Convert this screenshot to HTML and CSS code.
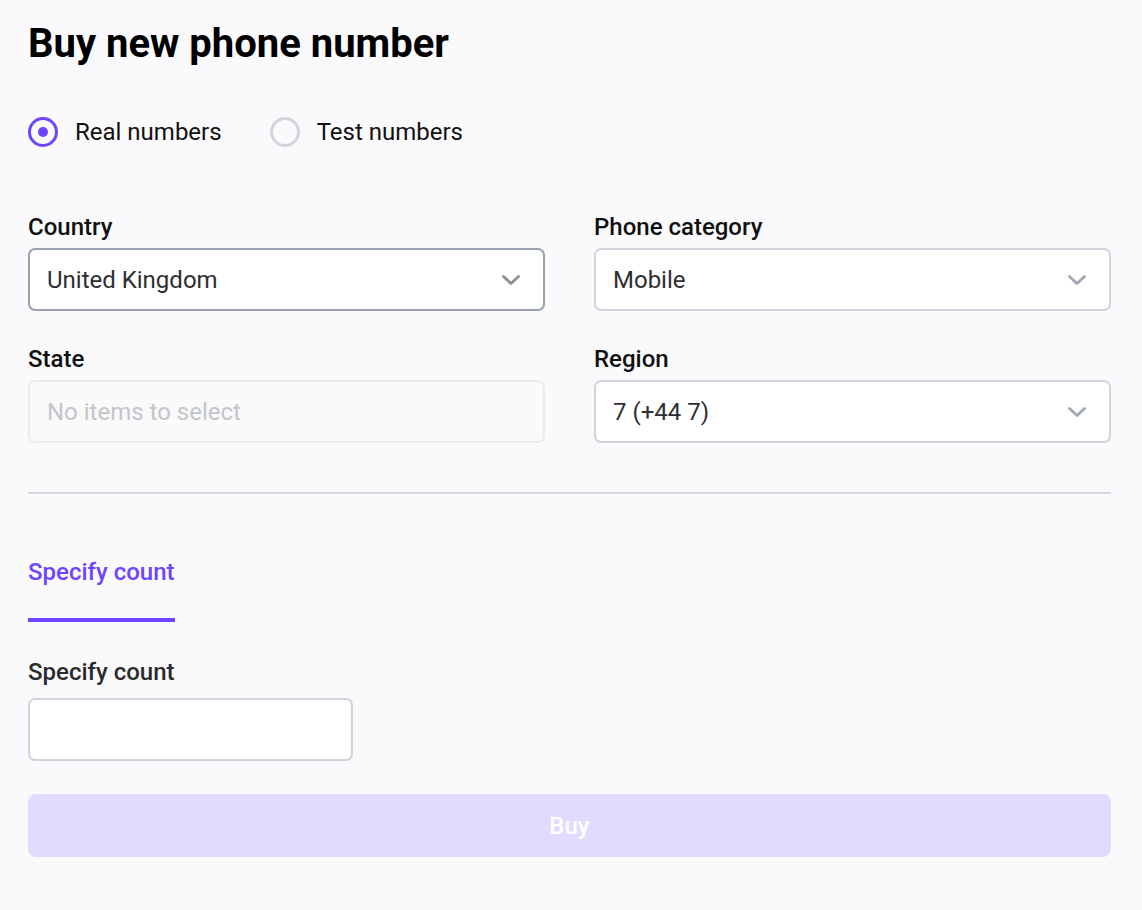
FILE: index.html
```html
<!DOCTYPE html>
<html lang="en">
<head>
<meta charset="utf-8">
<title>Buy new phone number</title>
<link rel="stylesheet" href="styles.css">
</head>
<body>
<main class="page">
  <h1 class="title">Buy new phone number</h1>

  <div class="radios">
    <label class="radio">
      <span class="radio-dot checked"></span>
      <span class="radio-label">Real numbers</span>
    </label>
    <label class="radio">
      <span class="radio-dot"></span>
      <span class="radio-label">Test numbers</span>
    </label>
  </div>

  <div class="grid">
    <div class="field">
      <div class="field-label">Country</div>
      <div class="select focused">
        <span class="select-value">United Kingdom</span>
        <svg class="chev" width="20" height="12" viewBox="0 0 20 12"><path d="M2.5 2.5 L10 9.5 L17.5 2.5" fill="none" stroke="currentColor" stroke-width="3" stroke-linecap="round" stroke-linejoin="round"/></svg>
      </div>
    </div>
    <div class="field">
      <div class="field-label">Phone category</div>
      <div class="select">
        <span class="select-value">Mobile</span>
        <svg class="chev light" width="20" height="12" viewBox="0 0 20 12"><path d="M2.5 2.5 L10 9.5 L17.5 2.5" fill="none" stroke="currentColor" stroke-width="3" stroke-linecap="round" stroke-linejoin="round"/></svg>
      </div>
    </div>
    <div class="field">
      <div class="field-label">State</div>
      <div class="select disabled">
        <span class="select-placeholder">No items to select</span>
      </div>
    </div>
    <div class="field">
      <div class="field-label">Region</div>
      <div class="select">
        <span class="select-value">7 (+44 7)</span>
        <svg class="chev light" width="20" height="12" viewBox="0 0 20 12"><path d="M2.5 2.5 L10 9.5 L17.5 2.5" fill="none" stroke="currentColor" stroke-width="3" stroke-linecap="round" stroke-linejoin="round"/></svg>
      </div>
    </div>
  </div>

  <hr class="divider">

  <div class="tabs">
    <div class="tab active">Specify count</div>
  </div>

  <div class="field count-field">
    <div class="field-label muted">Specify count</div>
    <div class="input"></div>
  </div>

  <button class="buy" type="button">Buy</button>
</main>
</body>
</html>
```

FILE: styles.css
```css
* { box-sizing: border-box; }

html, body {
  margin: 0;
  padding: 0;
  background: #fafafc;
}

body {
  font-family: Roboto, "Liberation Sans", Arial, sans-serif;
  color: #111;
}

.page {
  padding: 20px 31px 40px 28px;
}

.title {
  margin: 0;
  font-size: 40px;
  font-weight: 700;
  line-height: 48px;
  color: #000;
}

.radios {
  display: flex;
  gap: 48px;
  margin-top: 49px;
  align-items: center;
}

.radio {
  display: flex;
  align-items: center;
  gap: 17px;
}

.radio-dot {
  width: 30px;
  height: 30px;
  border-radius: 50%;
  border: 3px solid #d0d5dd;
  display: flex;
  align-items: center;
  justify-content: center;
}

.radio-dot.checked {
  border-color: #6e44ff;
}

.radio-dot.checked::after {
  content: "";
  width: 10px;
  height: 10px;
  border-radius: 50%;
  background: #6e44ff;
}

.radio-label {
  font-size: 24px;
  line-height: 30px;
  color: #111;
}

.grid {
  display: grid;
  grid-template-columns: 1fr 1fr;
  column-gap: 49px;
  row-gap: 34px;
  margin-top: 66px;
}

.field-label {
  font-size: 24px;
  font-weight: 500;
  line-height: 28px;
  color: #111;
  margin-bottom: 7px;
}

.field-label.muted {
  color: #2b2b2e;
  margin-bottom: 12px;
}

.select {
  height: 63px;
  border: 2px solid #d0d5dd;
  border-radius: 7px;
  background: #fff;
  display: flex;
  align-items: center;
  justify-content: space-between;
  padding: 0 22px 0 17px;
}

.select.focused {
  border-color: #98a1ad;
}

.select.disabled {
  background: #fafafb;
  border-color: #ebecf0;
}

.select-value {
  font-size: 24px;
  color: #2e2e33;
}

.select-placeholder {
  font-size: 24px;
  color: #c3c5cc;
}

.chev {
  color: #8c929c;
}

.chev.light {
  color: #a4aab5;
}

.divider {
  border: 0;
  height: 2px;
  background: #d4d7de;
  margin: 49px 0 0;
}

.tabs {
  display: flex;
  margin-top: 64px;
}

.tab {
  font-size: 24px;
  font-weight: 500;
  line-height: 28px;
  padding-bottom: 32px;
  border-bottom: 4px solid transparent;
}

.tab.active {
  color: #6e44ff;
  border-bottom-color: #6e44ff;
}

.count-field {
  margin-top: 36px;
}

.input {
  width: 325px;
  height: 63px;
  border: 2px solid #d0d5dd;
  border-radius: 7px;
  background: #fff;
}

.buy {
  display: block;
  width: 100%;
  height: 63px;
  margin-top: 33px;
  border: 0;
  border-radius: 8px;
  background: #e3dbff;
  color: #fff;
  font-family: Roboto, "Liberation Sans", Arial, sans-serif;
  font-size: 24px;
  font-weight: 500;
}
```
